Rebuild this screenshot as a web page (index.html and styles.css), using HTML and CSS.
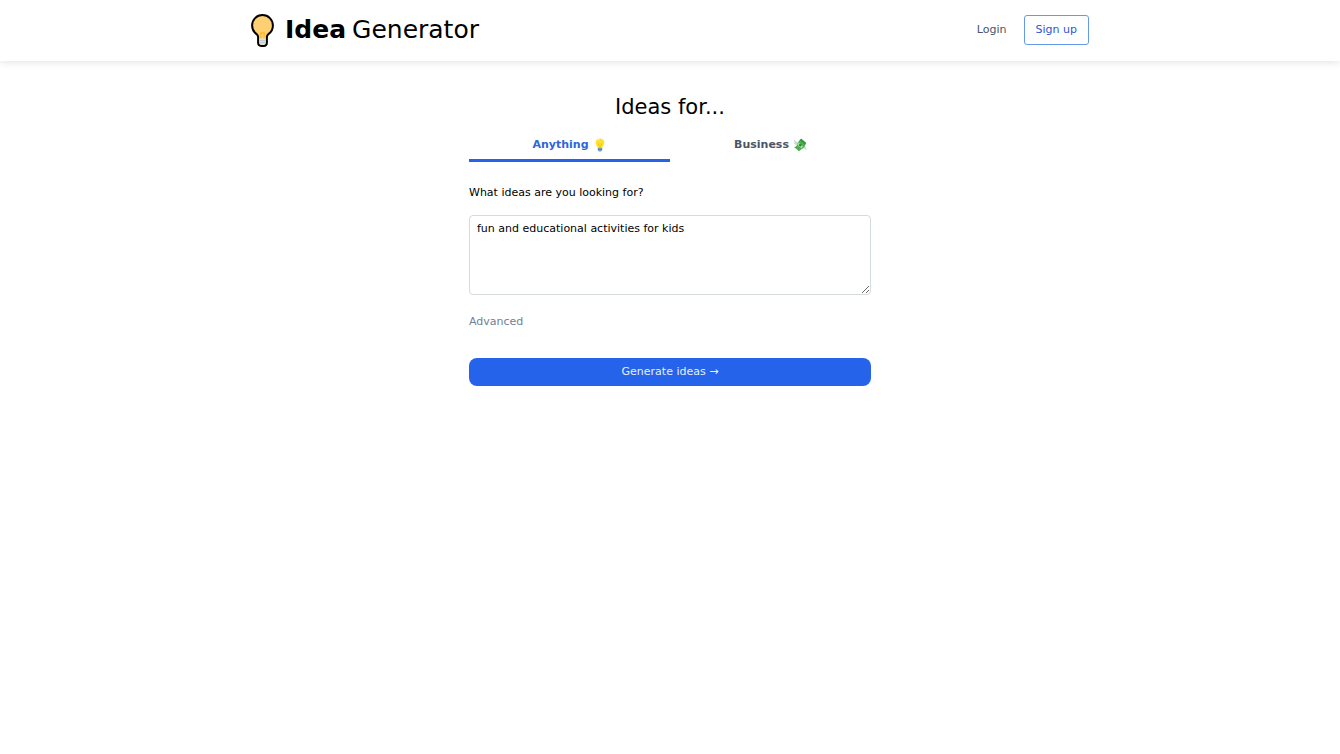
FILE: index.html
```
<!DOCTYPE html>
<html lang="en">
<head>
    <meta charset="UTF-8">
    <meta name="viewport" content="width=device-width, initial-scale=1.0">
    <title>Idea Generator</title>
    <link rel="stylesheet" href="styles.css">
</head>
<body>

<header class="header">
    <div class="header-inner">
        <a href="#" class="logo">
            <svg class="logo-icon" viewBox="0 0 23 33" aria-hidden="true">
                <path d="M11.5 1.1C5.700 1.100 1.100 5.700 1.100 11.400c0 3.900 2 6.900 4.500 8.700 1.100.8 1.500 1.700 1.500 3v5.400c0 2.100 1.300 3.400 3.200 3.400h2.400c1.900 0 3.200-1.300 3.200-3.400v-5.400c0-1.300.4-2.200 1.500-3 2.500-1.800 4.500-4.800 4.500-8.700C21.900 5.700 17.300 1.100 11.500 1.100z" fill="#ffd071" stroke="#000" stroke-width="2"/>
                <path d="M9.300 18.300l.9 6M13.700 18.300l-.9 6M9.300 18.500l1.100 1 1.100-1 1.100 1 1.100-1" fill="none" stroke="#fdb92a" stroke-width="1.100"/>
                <path d="M8.200 24.500h6.600v4.300c0 1.300-.8 2-2 2h-2.600c-1.200 0-2-.7-2-2z" fill="#dfe3e6"/>
                <path d="M8.200 26.400h6.600M8.200 28.500h6.600" stroke="#b4babe" stroke-width=".7"/>
            </svg>
            <span class="logo-text"><strong>Idea</strong><span>Generator</span></span>
        </a>
        <nav class="nav">
            <a href="#" class="login">Login</a>
            <a href="#" class="signup">Sign up</a>
        </nav>
    </div>
</header>

<main class="container">
    <h1>Ideas for...</h1>
    <div class="tabs">
        <button type="button" class="tab active">Anything
            <svg class="emoji" viewBox="0 0 14 14" aria-hidden="true">
                <path d="M7 .5C4.400.5 2.600 2.400 2.600 4.800c0 2.200 1.900 3.200 2.100 5h4.600c.2-1.800 2.100-2.800 2.100-5C11.400 2.400 9.600.5 7 .5z" fill="#fde030"/>
                <path d="M5.500 5.300l.8 4.200M8.500 5.300l-.8 4.200" stroke="#f2b600" stroke-width=".6"/>
                <path d="M4.600 2.600c.5-.7 1.200-1.100 2-1.200" fill="none" stroke="#fff59d" stroke-width=".9" stroke-linecap="round"/>
                <path d="M4.800 9.800h4.400v2.300c0 .8-1 1.500-2.200 1.500s-2.200-.7-2.200-1.500z" fill="#78a3ad"/>
                <path d="M4.800 11.200h4.400" stroke="#4f7580" stroke-width=".6"/>
            </svg>
        </button>
        <button type="button" class="tab">Business
            <svg class="emoji" viewBox="0 0 14 14" aria-hidden="true">
                <path d="M5.500 4.500C4 4.200 2.200 3 1 1.200c0 1.700.3 2.800 1 3.700-.6 0-1 0-1.500-.3.600 1.400 2 2.300 3.400 2.400zM9.500 8.500c1.400-.6 2.800-.4 4 .6-.5.200-.8.300-1.200.3.800.6 1.200 1.500 1.200 2.800-1.500-1.500-3-2-4.700-1.700z" fill="#ced6da"/>
                <path d="M8.200.8l5 4.200-1.800 4-5.400 4.200-5-4.200c1.700.2 2.600-.7 3.200-2.400C4.900 4.200 6 2.500 8.200.8z" fill="#4caf50"/>
                <path d="M8.200.8l5 4.200-1.400 1.500-5-4.200z" fill="#36973d"/>
                <path d="M5.300 4.300l4.900 4.300-1.600 1.800-4.700-4z" fill="#a5db8f"/>
                <circle cx="7.300" cy="7.100" r="1.400" fill="#2e8b3a"/>
            </svg>
        </button>
    </div>

    <form class="idea-form">
        <label for="ideas">What ideas are you looking for?</label>
        <textarea id="ideas" name="ideas">fun and educational activities for kids</textarea>
        <button type="button" class="advanced">Advanced</button>
        <button type="submit" class="generate">Generate ideas →</button>
    </form>
</main>

</body>
</html>
```
FILE: styles.css
```
* {
    box-sizing: border-box;
}

body {
    margin: 0;
    background-color: #fff;
    color: #000;
    font-family: "DejaVu Sans", sans-serif;
    font-size: 11px;
    line-height: 16px;
}

a {
    text-decoration: none;
}

button,
textarea {
    font-family: inherit;
    font-size: inherit;
    line-height: inherit;
}

button {
    padding: 0;
    border: none;
    background: none;
    cursor: pointer;
}

.header {
    padding: 14px 16px;
    box-shadow: 0 1px 8px rgba(0, 0, 0, 0.12);
}

.header-inner {
    display: flex;
    align-items: center;
    justify-content: space-between;
    max-width: 838px;
    margin: 0 auto;
}

.logo {
    display: flex;
    align-items: center;
    gap: 11px;
    color: #000;
}

.logo-icon {
    width: 23px;
    height: 33px;
}

.logo-text {
    display: flex;
    gap: 6px;
    padding-bottom: 2px;
    font-size: 25px;
    line-height: 30px;
}

.nav {
    display: flex;
    align-items: center;
    gap: 17px;
    padding-bottom: 2px;
}

.login {
    color: #4a5568;
}

.signup {
    padding: 6px 11px;
    border: 1px solid #6699ee;
    border-radius: 3px;
    color: #2f55d4;
}

.container {
    max-width: 402px;
    margin: 0 auto;
    padding-top: 32px;
}

h1 {
    margin: 0;
    font-size: 21px;
    font-weight: normal;
    line-height: 28px;
    text-align: center;
}

.tabs {
    display: flex;
    margin-top: 8px;
}

.tab {
    display: flex;
    flex: 1;
    align-items: center;
    justify-content: center;
    gap: 4px;
    padding: 8px 0 6px;
    border-bottom: 3px solid transparent;
    color: #4a5568;
    font-weight: bold;
}

.tab.active {
    border-bottom-color: #2563eb;
    color: #2b66dd;
}

.emoji {
    width: 14px;
    height: 14px;
}

.idea-form {
    display: flex;
    flex-direction: column;
    margin-top: 23px;
}

textarea {
    width: 100%;
    height: 80px;
    margin-top: 14px;
    padding: 5px 7px;
    border: 1px solid #d5dadd;
    border-radius: 4px;
    color: #000;
    resize: vertical;
}

.advanced {
    align-self: flex-start;
    margin-top: 19px;
    color: #718096;
}

.generate {
    margin-top: 28px;
    padding: 6px 0;
    border-radius: 8px;
    background-color: #2563eb;
    color: #e8effd;
}
```
